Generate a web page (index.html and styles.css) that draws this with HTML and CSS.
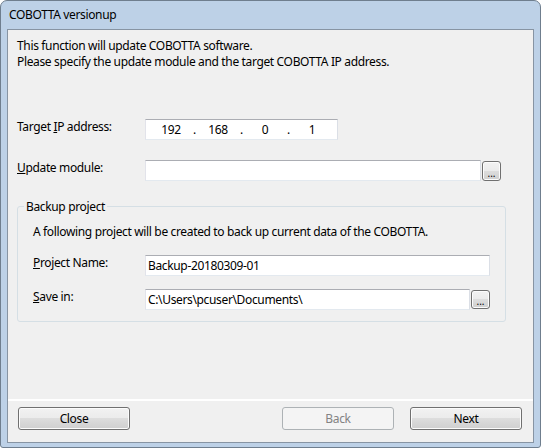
FILE: index.html
```html
<!DOCTYPE html>
<html lang="en">
  <head>
    <meta charset="UTF-8" />
    <title>COBOTTA versionup</title>
    <link rel="stylesheet" href="styles.css">
  </head>
  <body>
    <div class="window">
      <div class="titlebar">COBOTTA versionup</div>

      <div class="client">
        <div class="content">
          <!-- Intro -->
          <p class="intro">
            This function will update COBOTTA software.<br />
            Please specify the update module and the target COBOTTA IP address.
          </p>

          <!-- Target IP -->
          <div class="row row-ip">
            <label class="label">Target <u>I</u>P address:</label>
            <div class="ipbox">
              <span class="octet">192</span><span class="dot">.</span>
              <span class="octet">168</span><span class="dot">.</span>
              <span class="octet">0</span><span class="dot">.</span>
              <span class="octet">1</span>
            </div>
          </div>

          <!-- Update module -->
          <div class="row row-module">
            <label class="label"><u>U</u>pdate module:</label>
            <div class="textbox module-input"></div>
            <button class="browse">...</button>
          </div>

          <!-- Backup project -->
          <fieldset class="group">
            <legend>Backup project</legend>
            <p class="group-desc">A following project will be created to back up current data of the COBOTTA.</p>
            <div class="row row-project">
              <label class="label label-group"><u>P</u>roject Name:</label>
              <div class="textbox project-input">Backup-20180309-01</div>
            </div>
            <div class="row row-save">
              <label class="label label-group"><u>S</u>ave in:</label>
              <div class="textbox save-input">C:\Users\pcuser\Documents\</div>
              <button class="browse">...</button>
            </div>
          </fieldset>
        </div>

        <!-- Wizard buttons -->
        <div class="footer">
          <button class="btn">Close</button>
          <button class="btn btn-back" disabled>Back</button>
          <button class="btn btn-next">Next</button>
        </div>
      </div>
    </div>
  </body>
</html>
```

FILE: styles.css
```css
* {
  box-sizing: border-box;
}
body {
  margin: 0;
  font-family: "Noto Sans", "Liberation Sans", sans-serif;
  font-size: 12px;
  letter-spacing: -0.35px;
  color: #000;
  background: #fff;
}
.window {
  width: 541px;
  height: 448px;
  border: 1px solid #6f7e8e;
  border-radius: 7px 7px 3px 3px;
  background: #bdd1e7;
  padding: 0 6px 4px 6px;
  display: flex;
  flex-direction: column;
}
.titlebar {
  height: 28px;
  line-height: 28px;
  padding-left: 2px;
  flex-shrink: 0;
}
.client {
  flex: 1;
  border: 1px solid #8794a3;
  background: #f0f0f0;
  display: flex;
  flex-direction: column;
}
.content {
  flex: 1;
  padding: 8px 0 0 9px;
  line-height: 17px;
}
.intro {
  margin: 0;
  line-height: 16px;
}
.row {
  display: flex;
  align-items: flex-start;
}
.label {
  width: 128px;
  flex-shrink: 0;
  line-height: 17px;
  margin-top: -1px;
}
.label-group {
  width: 112px;
}
.row-ip {
  margin-top: 49px;
}
.row-module {
  margin-top: 20px;
}
.ipbox,
.textbox {
  height: 21px;
  background: #fff;
  border: 1px solid;
  border-color: #abadb3 #dbdfe6 #e3e9ef #e2e3ea;
  line-height: 19px;
  padding-left: 2px;
  white-space: nowrap;
  overflow: hidden;
}
.ipbox {
  width: 193px;
  display: flex;
  padding-left: 5px;
}
.octet {
  width: 40px;
  text-align: center;
}
.dot {
  width: 7px;
  text-align: center;
}
.module-input {
  width: 336px;
}
.browse {
  width: 19px;
  height: 20px;
  margin: 1px 0 0 1px;
  padding: 0 0 2px;
  border: 1px solid #707070;
  border-radius: 3px;
  background: linear-gradient(#f2f2f2 0%, #ebebeb 50%, #dddddd 50%, #cfcfcf 100%);
  box-shadow: inset 0 0 0 1px #fcfcfc;
  font-family: inherit;
  font-size: 10px;
  letter-spacing: 0;
  line-height: 10px;
  display: flex;
  align-items: flex-end;
  justify-content: center;
}
.group {
  margin: 17px 0 0 0;
  width: 488px;
  padding: 0 15px 11px 15px;
  border: 1px solid #d5dfe5;
  border-radius: 3px;
}
.group legend {
  margin-left: -9px;
  padding: 0 2px;
  line-height: 17px;
}
.group-desc {
  margin: 8px 0 0 0;
}
.row-project {
  margin-top: 15px;
}
.project-input {
  flex: 1;
}
.row-save {
  margin-top: 13px;
}
.save-input {
  width: 325px;
}
.save-input + .browse {
  height: 19px;
}
.footer {
  border-top: 2px solid #fff;
  padding: 6px 11px 12px 10px;
  display: flex;
}
.btn {
  width: 112px;
  height: 23px;
  border: 1px solid #707070;
  border-radius: 3px;
  background: linear-gradient(#f2f2f2 0%, #ebebeb 50%, #dddddd 50%, #cfcfcf 100%);
  box-shadow: inset 0 0 0 1px #fcfcfc;
  font-family: inherit;
  font-size: 12px;
  letter-spacing: -0.35px;
  color: #000;
  padding: 0;
}
.btn-back {
  margin-left: auto;
  border-color: #adb2b5;
  background: #f4f4f4;
  box-shadow: none;
  color: #838383;
}
.btn-next {
  margin-left: 16px;
}
```
